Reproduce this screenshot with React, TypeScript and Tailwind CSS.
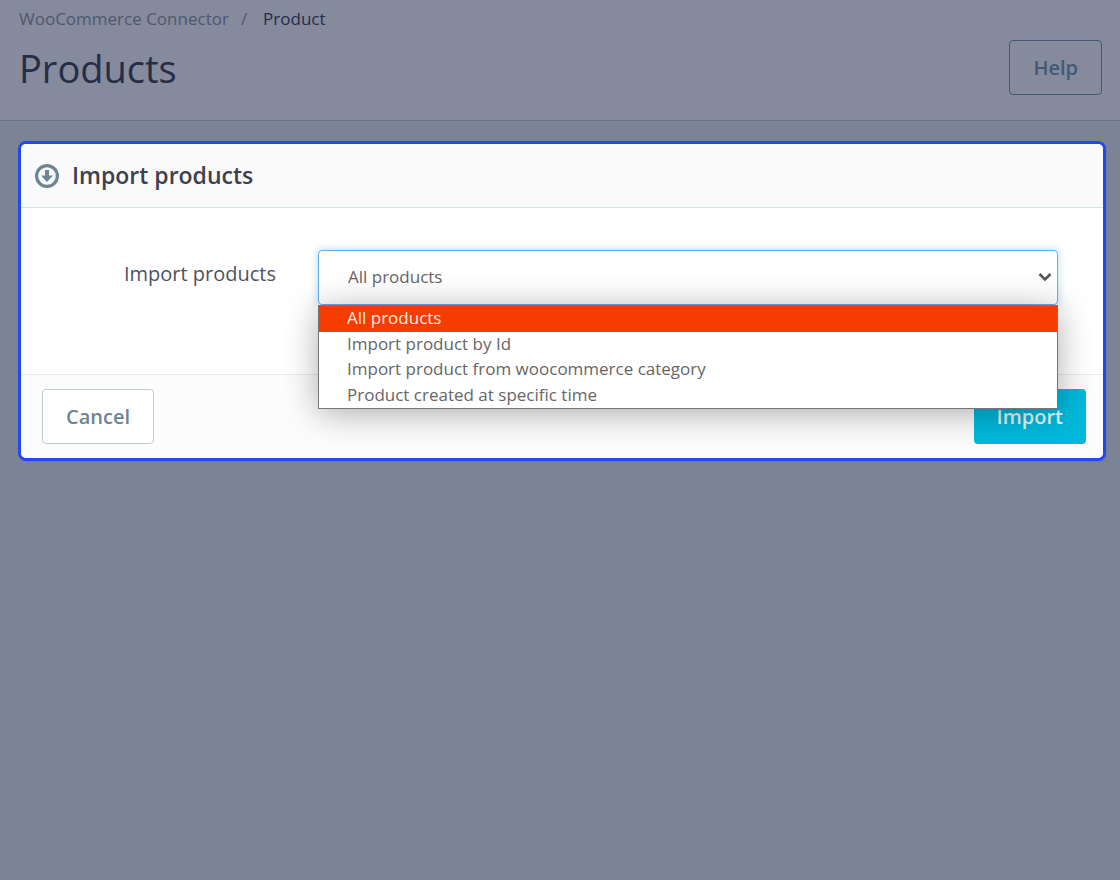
import { useState } from "react";
import clsx from "clsx";

const importModes = [
  { value: "all", label: "All products" },
  { value: "id", label: "Import product by Id" },
  { value: "category", label: "Import product from woocommerce category" },
  { value: "date", label: "Product created at specific time" },
];

function PageHeader() {
  return (
    <header className="border-b border-[#6f7589] bg-[#858a9d] pt-2 pr-[18px] pb-6 pl-[19px]">
      <nav aria-label="Breadcrumb" className="flex gap-3 text-[17px] leading-[22px]">
        <a href="#connector" className="text-[#50586e]">WooCommerce Connector</a>
        <span className="text-[#50586e]">/</span>
        <a href="#product" className="ml-1 text-[#262d47]">Product</a>
      </nav>
      <div className="flex items-start justify-between pt-[10px]">
        <h1 className="text-[38px] leading-[56px] text-[#262d47]">Products</h1>
        <button className="h-[55px] rounded border border-[#425a76] px-[23px] text-xl font-semibold text-[#425a76]">
          Help
        </button>
      </div>
    </header>
  );
}

function DownloadIcon() {
  return (
    <svg viewBox="0 0 24 24" className="size-6" aria-hidden="true">
      <circle cx="12" cy="12" r="10.4" fill="none" stroke="#6c8595" strokeWidth="3.2" />
      <path d="M10 6h4v5.500h4L12 18l-6-6.500h4z" fill="#6c8595" />
    </svg>
  );
}

function ImportModeSelect() {
  const [mode, setMode] = useState("all");

  return (
    <div className="relative flex-1">
      <select
        id="import-mode"
        value={mode}
        onChange={(e) => setMode(e.target.value)}
        className="block h-[55px] w-full appearance-none rounded border border-[#66afe9] bg-white px-[29px] pb-[2px] text-[17px] text-[#666] shadow-[0_0_8px_rgba(102,175,233,0.5)] outline-none"
      >
        {importModes.map((m) => (
          <option key={m.value} value={m.value}>{m.label}</option>
        ))}
      </select>
      <svg viewBox="0 0 14 10" className="pointer-events-none absolute top-[22px] right-[6px] h-[10px] w-[14px]" aria-hidden="true">
        <path d="M1.500 2 7 7.500 12.500 2" fill="none" stroke="#555" strokeWidth="2.600" />
      </svg>

      <ul
        role="listbox"
        aria-label="Import products"
        className="absolute top-full right-0 left-0 z-10 grid h-[104px] grid-rows-4 border border-[#767676] bg-white text-[17px] leading-[23px] text-[#666] shadow-[0_4px_32px_rgba(0,0,0,0.32)]"
      >
        {importModes.map((m) => (
          <li
            key={m.value}
            role="option"
            aria-selected={m.value === mode}
            onClick={() => setMode(m.value)}
            className={clsx("px-7", m.value === mode && "bg-[#f73c00] text-[#ffe9e2]")}
          >
            {m.label}
          </li>
        ))}
      </ul>
    </div>
  );
}

export default function App() {
  return (
    <div className="min-h-screen bg-[#7b8397] font-['Open_Sans','Noto_Sans',sans-serif]">
      <PageHeader />

      <main className="pt-5 pr-[14px] pl-[18px]">
        <form
          onSubmit={(e) => e.preventDefault()}
          className="rounded-lg border-3 border-[#2048f5] bg-white shadow-[1px_1px_1px_#727a8f]"
        >
          <div className="flex h-16 items-center gap-[13px] rounded-t-[5px] border-b border-[#d5e3e8] bg-[#fafafa] px-[14px]">
            <DownloadIcon />
            <h2 className="text-[23px] font-semibold text-[#3d404d]">Import products</h2>
          </div>

          <div className="flex gap-[42px] pt-[42px] pr-[45px] pb-[69px]">
            <label htmlFor="import-mode" className="w-[255px] pt-2 text-right text-xl leading-8 text-[#4f5260]">
              Import products
            </label>
            <ImportModeSelect />
          </div>

          <div className="flex justify-between rounded-b-[5px] border-t border-[#ebeced] bg-[#fcfcfd] py-[14px] pr-[17px] pl-[21px]">
            <button type="button" className="h-[55px] rounded border border-[#bbcdd2] bg-white px-[23px] text-xl font-semibold text-[#6c8595]">
              Cancel
            </button>
            <button type="submit" className="h-[55px] rounded bg-[#00b9dc] px-[23px] text-xl font-semibold text-[#e8f6fa]">
              Import
            </button>
          </div>
        </form>
      </main>
    </div>
  );
}
